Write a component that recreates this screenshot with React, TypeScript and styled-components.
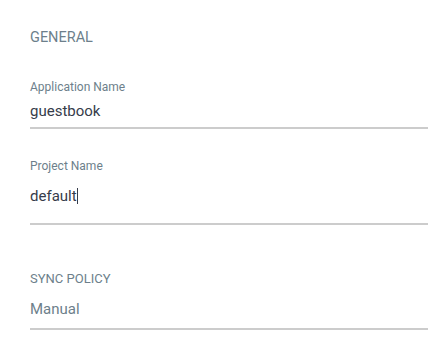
import React from "react";
import styled, { createGlobalStyle } from "styled-components";

const Global = createGlobalStyle`
  html, body { margin: 0; padding: 0; background: #ffffff; }
  body { font-family: Roboto, "Liberation Sans", sans-serif; }
`;

const Page = styled.div`
  padding: 30px 0 0 30px;
  width: 428px;
  box-sizing: border-box;
`;

const SectionTitle = styled.div<{ $size: number; $mt?: number; $mb: number }>`
  font-size: ${(p) => p.$size}px;
  line-height: 16px;
  color: #6d7f8b;
  text-transform: uppercase;
  margin-top: ${(p) => p.$mt ?? 0}px;
  margin-bottom: ${(p) => p.$mb}px;
`;

const Field = styled.div<{ $mt?: number; $gap: number; $pb: number }>`
  display: flex;
  flex-direction: column;
  gap: ${(p) => p.$gap}px;
  margin-top: ${(p) => p.$mt ?? 0}px;
  padding-bottom: ${(p) => p.$pb}px;
  border-bottom: 2px solid #cccccc;
`;

const Label = styled.div`
  font-size: 12px;
  line-height: 14px;
  color: #6d7f8b;
`;

const Value = styled.div<{ $muted?: boolean }>`
  font-size: 15px;
  line-height: 20px;
  color: ${(p) => (p.$muted ? "#6d7f8b" : "#363c4a")};
  display: flex;
  align-items: center;
`;

const Caret = styled.span`
  display: inline-block;
  width: 1px;
  height: 16px;
  background: #363c4a;
`;

export default function App() {
  return (
    <>
      <Global />
      <Page>
        <SectionTitle $size={14.5} $mb={34}>
          General
        </SectionTitle>
        <Field $gap={7} $pb={6}>
          <Label>Application Name</Label>
          <Value>guestbook</Value>
        </Field>
        <Field $mt={30} $gap={13} $pb={17}>
          <Label>Project Name</Label>
          <Value>
            default
            <Caret />
          </Value>
        </Field>
        <SectionTitle $size={13} $mt={46} $mb={12}>
          Sync Policy
        </SectionTitle>
        <Field $gap={0} $pb={9}>
          <Value $muted>Manual</Value>
        </Field>
      </Page>
    </>
  );
}
